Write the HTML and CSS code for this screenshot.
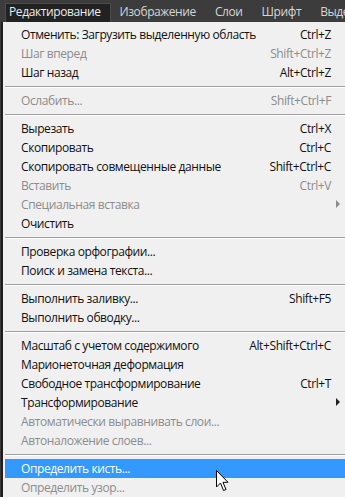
FILE: index.html
```html
<!DOCTYPE html>
<html lang="ru">
  <head>
    <meta charset="UTF-8" />
    <title>Редактирование</title>
    <link rel="stylesheet" href="styles.css">
  </head>
  <body>
    <div class="menubar">
      <span class="top active">Редактирование</span>
      <span class="top">Изображение</span>
      <span class="top">Слои</span>
      <span class="top">Шрифт</span>
      <span class="top">Выде</span>
    </div>

    <div class="panel">
      <div class="row"><span>Отменить: Загрузить выделенную область</span><span class="key">Ctrl+Z</span></div>
      <div class="row off"><span>Шаг вперед</span><span class="key">Shift+Ctrl+Z</span></div>
      <div class="row"><span>Шаг назад</span><span class="key">Alt+Ctrl+Z</span></div>
      <div class="sep"></div>
      <div class="row off"><span>Ослабить...</span><span class="key">Shift+Ctrl+F</span></div>
      <div class="sep"></div>
      <div class="row"><span>Вырезать</span><span class="key">Ctrl+X</span></div>
      <div class="row"><span>Скопировать</span><span class="key">Ctrl+C</span></div>
      <div class="row"><span>Скопировать совмещенные данные</span><span class="key">Shift+Ctrl+C</span></div>
      <div class="row off"><span>Вставить</span><span class="key">Ctrl+V</span></div>
      <div class="row off"><span>Специальная вставка</span><span class="key"></span><span class="arrow"></span></div>
      <div class="row"><span>Очистить</span></div>
      <div class="sep"></div>
      <div class="row"><span>Проверка орфографии...</span></div>
      <div class="row"><span>Поиск и замена текста...</span></div>
      <div class="sep"></div>
      <div class="row"><span>Выполнить заливку...</span><span class="key">Shift+F5</span></div>
      <div class="row"><span>Выполнить обводку...</span></div>
      <div class="sep"></div>
      <div class="row"><span>Масштаб с учетом содержимого</span><span class="key">Alt+Shift+Ctrl+C</span></div>
      <div class="row"><span>Марионеточная деформация</span></div>
      <div class="row"><span>Свободное трансформирование</span><span class="key">Ctrl+T</span></div>
      <div class="row"><span>Трансформирование</span><span class="key"></span><span class="arrow dark"></span></div>
      <div class="row off"><span>Автоматически выравнивать слои...</span></div>
      <div class="row off"><span>Автоналожение слоев...</span></div>
      <div class="sep"></div>
      <div class="row hover"><span>Определить кисть...</span></div>
      <div class="row off"><span>Определить узор...</span></div>
    </div>

    <svg class="cursor" width="13" height="22" viewBox="0 0 13 22">
      <path d="M0.5 0.5 L0.5 17 L4.5 13 L7.5 20.5 L10 19.5 L7 12.3 L12 12.3 Z" fill="#fff" stroke="#000" stroke-width="1" stroke-linejoin="miter" />
    </svg>
  </body>
</html>
```

FILE: styles.css
```css
* {
  box-sizing: border-box;
}
html, body {
  margin: 0;
  padding: 0;
}
body {
  width: 345px;
  height: 497px;
  overflow: hidden;
  position: relative;
  background: #3a3a3a;
  font-family: "Open Sans", "Noto Sans", sans-serif;
  font-size: 12px;
  letter-spacing: -0.4px;
}

.menubar {
  display: flex;
  gap: 4px;
  height: 22px;
  padding: 3px 0 0 5px;
  background: #3c3c3c;
  white-space: nowrap;
  overflow: hidden;
}
.menubar .top {
  height: 19px;
  line-height: 18px;
  padding: 0 11px 0 4px;
  color: #d6d6d6;
}
.menubar .active {
  background: #222;
  color: #ececec;
  box-shadow: inset 1px 1px 0 #4c4c4c, inset -1px 0 0 #4c4c4c;
}

.panel {
  width: 360px;
  height: 475px;
  margin-left: 1px;
  padding: 3px 0 0 2px;
  background: #f0f0f0;
  border-left: 2px solid #1f1f1f;
}

.row {
  display: grid;
  grid-template-columns: 1fr auto 30px;
  height: 19px;
  line-height: 19px;
  padding-left: 16px;
  color: #111;
  white-space: nowrap;
}
.row.off {
  color: #8c8c8c;
}
.row.hover {
  background: #3399ff;
  color: #fff;
}
.key {
  text-align: right;
}

.arrow {
  width: 0;
  height: 0;
  margin: 5px 0 0 5px;
  border-top: 4px solid transparent;
  border-bottom: 4px solid transparent;
  border-left: 4px solid #8c8c8c;
}
.arrow.dark {
  border-left-color: #222;
}

.sep {
  height: 9px;
  padding-top: 4px;
}
.sep::before {
  content: "";
  display: block;
  height: 1px;
  background: #a0a0a0;
  border-bottom: 1px solid #fff;
  box-sizing: content-box;
}

.cursor {
  position: absolute;
  left: 216px;
  top: 470px;
}
```
